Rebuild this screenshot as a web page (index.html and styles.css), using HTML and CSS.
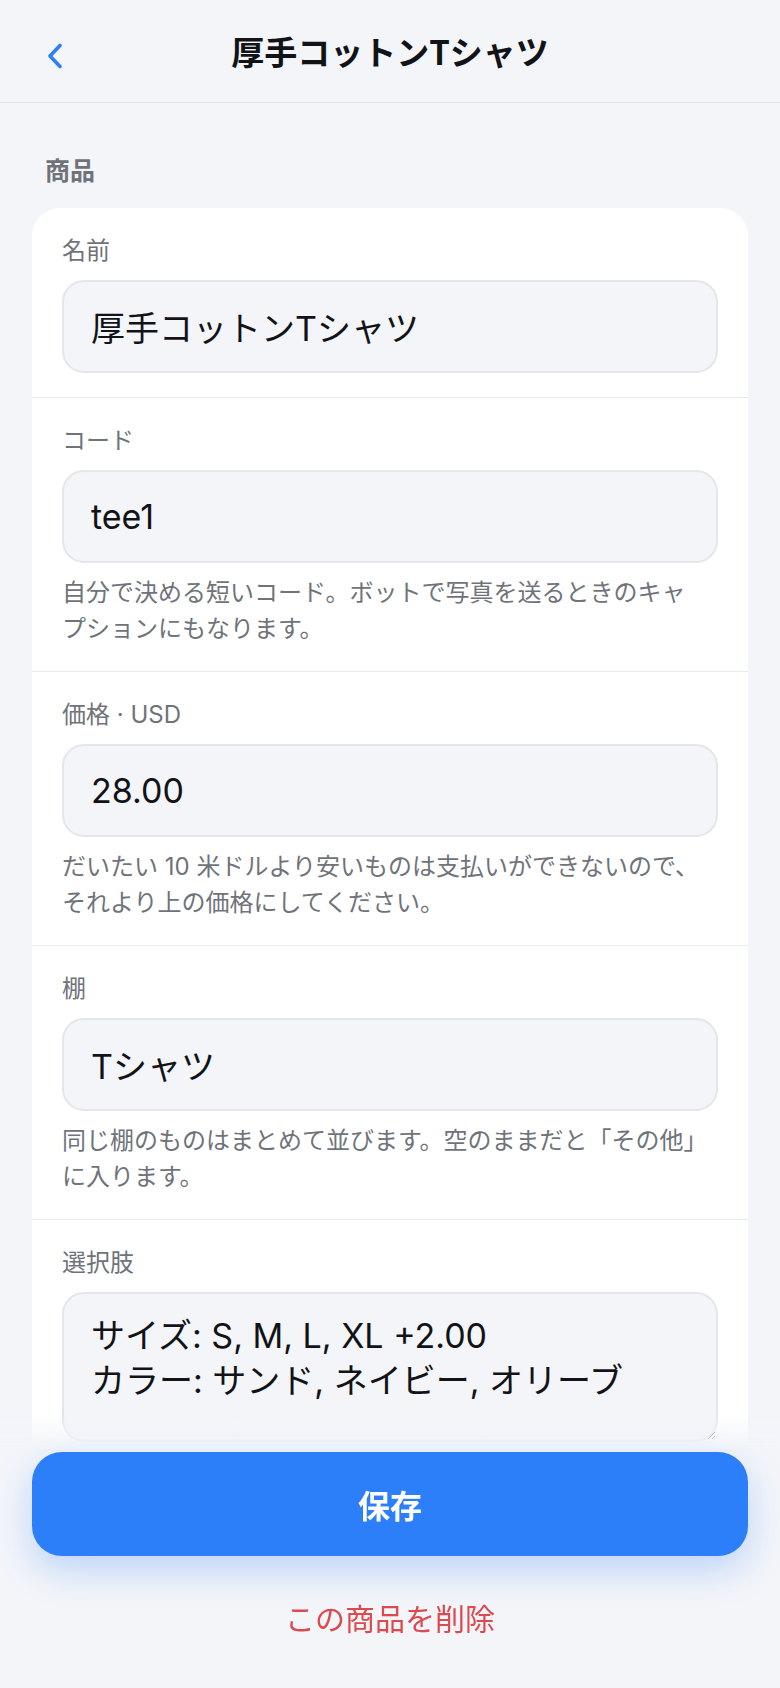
FILE: index.html
```html
<!DOCTYPE html>
<html lang="ja">
<head>
<meta charset="utf-8">
<title>厚手コットンTシャツ</title>
<link rel="stylesheet" href="styles.css">
</head>
<body>
<header class="topbar">
  <div class="topbar-side">
    <button class="back" aria-label="戻る">
      <svg width="18" height="26" viewBox="0 0 18 26"><path d="M14 2.5 L4 13 L14 23.5" fill="none" stroke="#2d7ff9" stroke-width="3.6" stroke-linecap="round" stroke-linejoin="round"/></svg>
    </button>
  </div>
  <h1 class="title">厚手コットンTシャツ</h1>
  <div class="topbar-side"></div>
</header>

<main class="content">
  <h2 class="section-title">商品</h2>
  <div class="card">
    <div class="row">
      <label class="label">名前</label>
      <input class="field" type="text" value="厚手コットンTシャツ">
    </div>
    <div class="row">
      <label class="label">コード</label>
      <input class="field" type="text" value="tee1">
      <p class="help">自分で決める短いコード。ボットで写真を送るときのキャプションにもなります。</p>
    </div>
    <div class="row">
      <label class="label">価格 · USD</label>
      <input class="field" type="text" value="28.00">
      <p class="help">だいたい 10 米ドルより安いものは支払いができないので、それより上の価格にしてください。</p>
    </div>
    <div class="row">
      <label class="label">棚</label>
      <input class="field" type="text" value="Tシャツ">
      <p class="help">同じ棚のものはまとめて並びます。空のままだと「その他」に入ります。</p>
    </div>
    <div class="row">
      <label class="label">選択肢</label>
      <textarea class="field area">サイズ: S, M, L, XL +2.00
カラー: サンド, ネイビー, オリーブ</textarea>
    </div>
  </div>
</main>

<footer class="footer">
  <button class="save">保存</button>
  <button class="delete">この商品を削除</button>
</footer>
</body>
</html>
```

FILE: styles.css
```css
* { box-sizing: border-box; }
html, body {
  margin: 0;
  padding: 0;
}
body {
  background: #f3f5f9;
  font-family: "Inter", "Noto Sans CJK JP", sans-serif;
  color: #111317;
  min-height: 1688px;
}
.topbar {
  height: 103px;
  border-bottom: 1px solid #e4e6ea;
  display: grid;
  grid-template-columns: 1fr auto 1fr;
  align-items: center;
  background: #f3f5f9;
}
.topbar-side {
  display: flex;
  align-items: center;
}
.back {
  margin-left: 46px;
  margin-top: 10px;
  padding: 0;
  border: 0;
  background: none;
  display: flex;
}
.title {
  margin: 0;
  font-size: 33px;
  font-weight: 700;
  line-height: 44px;
  color: #111317;
  font-family: "Noto Sans CJK JP", sans-serif;
}
.content {
  padding: 0 32px 300px;
}
.section-title {
  margin: 51px 0 0 13px;
  font-size: 25px;
  line-height: 34px;
  font-weight: 700;
  color: #6e737a;
}
.card {
  margin-top: 20px;
  background: #ffffff;
  border-radius: 28px;
  overflow: hidden;
}
.row {
  display: flex;
  flex-direction: column;
  gap: 12px;
  padding: 26px 30px 24px;
  border-bottom: 1px solid #e7e9ec;
}
.row:last-child { border-bottom: 0; }
.label {
  font-size: 24px;
  line-height: 34px;
  color: #6f737a;
}
.field {
  font: inherit;
  font-size: 34px;
  color: #111317;
  height: 93px;
  width: 100%;
  padding: 0 27px;
  background: #f3f5f8;
  border: 2px solid #e3e6ea;
  border-radius: 22px;
  outline: none;
}
.area {
  height: 150px;
  padding: 19px 27px;
  line-height: 45px;
  resize: vertical;
  display: block;
}
.help {
  margin: 0;
  padding-right: 16px;
  font-size: 24px;
  line-height: 36px;
  color: #6f737a;
}
.footer {
  position: fixed;
  left: 0;
  right: 0;
  bottom: 0;
  padding: 40px 32px 50px;
  display: flex;
  flex-direction: column;
  gap: 40px;
  background: linear-gradient(to bottom, rgba(243,245,249,0) 0px, #f3f5f9 38px);
}
.save {
  height: 104px;
  border: 0;
  border-radius: 30px;
  background: #2d7ff9;
  color: #ffffff;
  font-family: "Noto Sans CJK JP", sans-serif;
  font-size: 32px;
  font-weight: 700;
  box-shadow: 0 14px 36px rgba(45, 127, 249, 0.28);
}
.delete {
  border: 0;
  background: none;
  padding: 0;
  height: 42px;
  font-family: "Noto Sans CJK JP", sans-serif;
  font-size: 30px;
  line-height: 42px;
  color: #dc4a4f;
}
```
